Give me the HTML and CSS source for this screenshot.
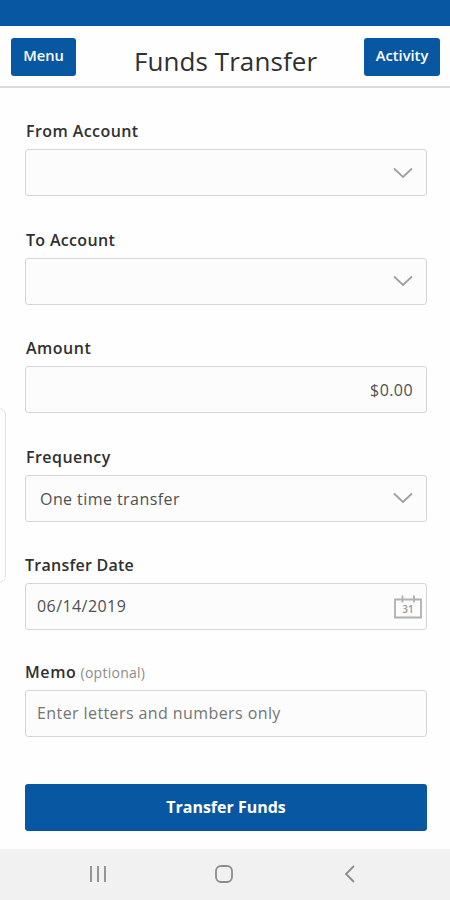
FILE: index.html
```html
<!DOCTYPE html>
<html lang="en">
<head>
<meta charset="utf-8">
<title>Funds Transfer</title>
<link rel="stylesheet" href="styles.css">
</head>
<body>
<div class="status-bar"></div>
<header class="header">
  <button class="nav-btn nav-menu">Menu</button>
  <h1 class="title">Funds Transfer</h1>
  <button class="nav-btn nav-activity">Activity</button>
</header>
<main class="form">
  <div class="field">
    <div class="label"><span class="l-from">From Account</span></div>
    <div class="control"><svg class="chevron" viewBox="0 0 20 12"><path d="M1 1.5 10 10 19 1.5"/></svg></div>
  </div>
  <div class="field">
    <div class="label"><span class="l-to">To Account</span></div>
    <div class="control"><svg class="chevron" viewBox="0 0 20 12"><path d="M1 1.5 10 10 19 1.5"/></svg></div>
  </div>
  <div class="field">
    <div class="label"><span class="l-amount">Amount</span></div>
    <div class="control"><span class="value amount">$0.00</span></div>
  </div>
  <div class="field">
    <div class="label"><span class="l-freq">Frequency</span></div>
    <div class="control"><span class="value frequency">One time transfer</span><svg class="chevron" viewBox="0 0 20 12"><path d="M1 1.5 10 10 19 1.5"/></svg></div>
  </div>
  <div class="field field-date">
    <div class="label label-date"><span class="l-date">Transfer Date</span></div>
    <div class="control"><span class="value date">06/14/2019</span>
      <svg class="calendar" viewBox="0 0 28 24"><path d="M1 4.5h26V22.500H1zM8.500 0.500v7M20 0.500v7"/><text x="14" y="17.500" text-anchor="middle">31</text></svg>
    </div>
  </div>
  <div class="field">
    <div class="label label-memo"><span class="l-memo">Memo</span> <span class="optional">(optional)</span></div>
    <div class="control"><span class="value memo">Enter letters and numbers only</span></div>
  </div>
  <button class="submit"><span>Transfer Funds</span></button>
</main>
<nav class="system-nav">
  <svg viewBox="0 0 20 20"><path d="M3 2v16M10 2v16M17 2v16"/></svg>
  <svg viewBox="0 0 20 20"><rect x="2" y="2" width="16" height="16" rx="5"/></svg>
  <svg viewBox="0 0 20 20"><path d="M14 2 6 10l8 8"/></svg>
</nav>
<div class="edge-handle"></div>
</body>
</html>
```
FILE: styles.css
```css
* { box-sizing: border-box; }
body {
  margin: 0;
  width: 450px;
  height: 900px;
  overflow: hidden;
  display: flex;
  flex-direction: column;
  background: #fefefe;
  color: #303030;
  font-family: "Open Sans", sans-serif;
}
button { border: 0; font-family: inherit; color: #fff; background: #0857a2; }
.status-bar { height: 25.5px; flex: none; background: #0857a2; }
.header {
  height: 62.5px;
  flex: none;
  display: flex;
  justify-content: space-between;
  align-items: flex-start;
  padding: 12.5px 10px 0 11px;
  border-bottom: 2px solid #dcdcdc;
}
.nav-btn { height: 38px; border-radius: 3px; padding: 0 0 4px; font-size: 14.7px; font-weight: 600; line-height: 20px; }
.nav-menu { width: 65px; }
.nav-activity { width: 76px; }
.title { margin: 6px 0 0 11px; font-size: 26px; letter-spacing: 0.08px; line-height: 34px; font-weight: 400; white-space: nowrap; }
.form { flex: none; height: 761px; padding: 32px 23px 0 25px; }
.field { height: 108.5px; }
.field-date { height: 107px; }
.label { height: 29px; padding-left: 1px; font-size: 16px; line-height: 22px; font-weight: 600; white-space: nowrap; }
.label-date, .label-memo { padding-left: 0; }
.l-from { letter-spacing: 0.42px; }
.l-to { letter-spacing: 0.32px; }
.l-amount { letter-spacing: 0.5px; }
.l-freq { letter-spacing: 0.45px; }
.l-date { letter-spacing: 0.25px; }
.l-memo { letter-spacing: 0.6px; }
.optional { color: #8c8c8c; font-size: 14px; font-weight: 400; letter-spacing: 0.25px; }
.control {
  height: 47px;
  display: flex;
  align-items: center;
  border: 1.5px solid #d5d5d5;
  border-radius: 3px;
  background: #fcfcfc;
}
.value { font-size: 16px; line-height: 22px; color: #505050; white-space: nowrap; letter-spacing: 0.43px; }
.amount { margin-left: auto; margin-right: 13px; }
.frequency { margin-left: 14px; padding-top: 2px; }
.date, .memo { margin-left: 11px; padding-bottom: 1px; }
.memo { color: #747474; letter-spacing: 0.41px; }
.chevron { width: 20px; height: 12px; margin-left: auto; margin-right: 13px; }
.chevron path { fill: none; stroke: #a0a0a0; stroke-width: 1.8; }
.calendar { width: 28px; height: 24px; margin-left: auto; margin-right: 4px; }
.calendar path { fill: none; stroke: #b0b0b0; stroke-width: 1.8; }
.calendar text { font-size: 10px; font-weight: 600; fill: #999; }
.submit { display: block; width: 402px; height: 47px; margin-top: 14.5px; padding: 0 0 2px; border-radius: 3px; font-size: 16px; font-weight: 700; }
.system-nav { height: 51px; flex: none; display: flex; justify-content: space-between; align-items: center; padding: 0 90px 2px 88px; background: #f1f1f1; }
.system-nav svg { width: 20px; height: 20px; fill: none; stroke: #8c8c8c; stroke-width: 1.8; }
.edge-handle { position: absolute; left: -10px; top: 408px; width: 16px; height: 175px; border: 1.5px solid #e2e2e2; border-radius: 7px; background: #fefefe; }
```
